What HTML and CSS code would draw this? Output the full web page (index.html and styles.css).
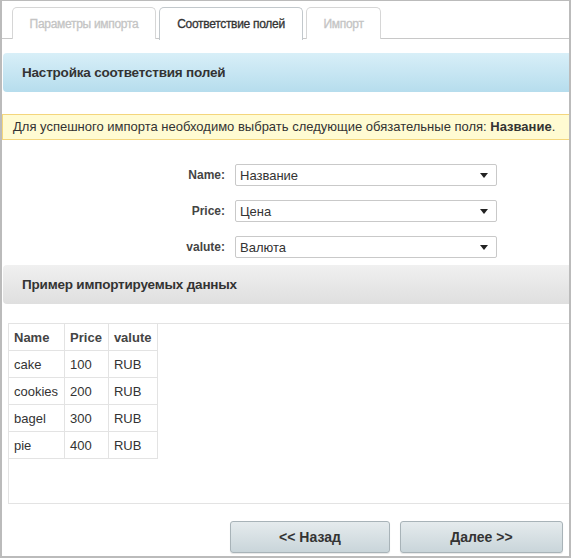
FILE: index.html
```html
<!DOCTYPE html>
<html lang="ru">
<head>
    <meta charset="UTF-8">
    <title>Импорт</title>
    <link rel="stylesheet" href="styles.css">
</head>
<body>
    <div class="window">
        <div class="tabs">
            <div class="tab tab-params">Параметры импорта</div>
            <div class="tab tab-fields active">Соответствие полей</div>
            <div class="tab tab-import">Импорт</div>
        </div>

        <div class="section-title blue">Настройка соответствия полей</div>

        <div class="notice">
            Для успешного импорта необходимо выбрать следующие обязательные поля: <b>Название</b>.
        </div>

        <div class="mapping">
            <div class="map-row">
                <label>Name:</label>
                <div class="select"><span>Название</span><i class="arrow"></i></div>
            </div>
            <div class="map-row">
                <label>Price:</label>
                <div class="select"><span>Цена</span><i class="arrow"></i></div>
            </div>
            <div class="map-row">
                <label>valute:</label>
                <div class="select"><span>Валюта</span><i class="arrow"></i></div>
            </div>
        </div>

        <div class="section-title gray">Пример импортируемых данных</div>

        <div class="preview">
            <table>
                <tr><th>Name</th><th>Price</th><th>valute</th></tr>
                <tr><td>cake</td><td>100</td><td>RUB</td></tr>
                <tr><td>cookies</td><td>200</td><td>RUB</td></tr>
                <tr><td>bagel</td><td>300</td><td>RUB</td></tr>
                <tr><td>pie</td><td>400</td><td>RUB</td></tr>
            </table>
        </div>

        <div class="buttons">
            <button class="btn btn-back">&lt;&lt; Назад</button>
            <button class="btn btn-next">Далее &gt;&gt;</button>
        </div>
    </div>
</body>
</html>
```

FILE: styles.css
```css
body {
    margin: 0;
    font-family: "Liberation Sans", Arial, sans-serif;
    font-size: 13px;
    color: #333;
    background: #fff;
}

.window {
    width: 571px;
    height: 558px;
    box-sizing: border-box;
    border: 1px solid #bbb;
    border-left-width: 2px;
    border-bottom-width: 2px;
    border-right-width: 2px;
    overflow: hidden;
}

.tabs {
    display: flex;
    gap: 3px;
    height: 38px;
    padding: 6px 0 0 10px;
    box-sizing: border-box;
    border-bottom: 1px solid #c8c8c8;
}

.tab {
    height: 32px;
    box-sizing: border-box;
    border: 1px solid #d6d6d6;
    border-bottom: none;
    border-radius: 5px 5px 0 0;
    background: #fff;
    color: #c4c4c4;
    font-size: 12px;
    letter-spacing: -0.3px;
    -webkit-text-stroke: 0.3px;
    text-align: center;
    line-height: 32px;
}

.tab-params { width: 144px; }
.tab-fields { width: 144px; }
.tab-import { width: 75px; }

.tab.active {
    color: #333;
    border-color: #c2c8cc;
    height: 33px;
    margin-bottom: -1px;
}

.section-title {
    margin: 14px 0 0 1px;
    height: 39px;
    line-height: 39px;
    padding-left: 19px;
    border-radius: 4px 0 0 4px;
    font-size: 13.5px;
    letter-spacing: -0.2px;
    font-weight: bold;
    color: #333;
}

.section-title.blue {
    background: linear-gradient(#d8eff8, #b6dded);
}

.section-title.gray {
    margin-top: 0;
    background: linear-gradient(#f0f0f0, #dfdfdf);
}

.notice {
    margin-top: 22px;
    height: 26px;
    line-height: 24px;
    box-sizing: border-box;
    padding-left: 10px;
    background: #fffbd2;
    border: 1px solid #f4d67c;
    border-right: none;
    font-size: 13px;
    white-space: nowrap;
}

.mapping {
    padding-top: 24px;
}

.map-row {
    display: flex;
    align-items: center;
    height: 22px;
    margin-bottom: 14px;
}

.map-row:last-child {
    margin-bottom: 7px;
}

.map-row label {
    width: 223px;
    text-align: right;
    padding-right: 10px;
    font-weight: bold;
    font-size: 12px;
    color: #444;
}

.select {
    width: 262px;
    height: 22px;
    box-sizing: border-box;
    border: 1px solid #c9c9c9;
    border-radius: 2px;
    display: flex;
    align-items: center;
    justify-content: space-between;
    padding: 0 8px 0 4px;
    font-size: 13px;
}

.arrow {
    width: 0;
    height: 0;
    border-left: 4px solid transparent;
    border-right: 4px solid transparent;
    border-top: 5px solid #222;
}

.preview {
    margin: 19px 0 0 6px;
    height: 181px;
    box-sizing: border-box;
    border: 1px solid #e3e3e3;
    border-right: none;
}

table {
    border-collapse: collapse;
    font-size: 13px;
}

th, td {
    height: 26px;
    padding: 0 6px 0 5px;
    border: 1px solid #e3e3e3;
    text-align: left;
}

th {
    font-weight: bold;
    color: #444;
}

tr:first-child th { border-top: none; }
tr th:first-child, tr td:first-child { border-left: none; }

.buttons {
    display: flex;
    justify-content: flex-end;
    gap: 10px;
    padding: 17px 6px 0 0;
}

.btn {
    height: 32px;
    border: 1px solid #a8b3b8;
    border-radius: 3px;
    background: linear-gradient(#e5ebed, #c9d5da);
    font-family: "Liberation Sans", Arial, sans-serif;
    font-size: 14px;
    font-weight: bold;
    color: #333;
    box-shadow: 0 1px 1px rgba(0,0,0,0.1);
}

.btn-back { width: 160px; }
.btn-next { width: 163px; }
```
